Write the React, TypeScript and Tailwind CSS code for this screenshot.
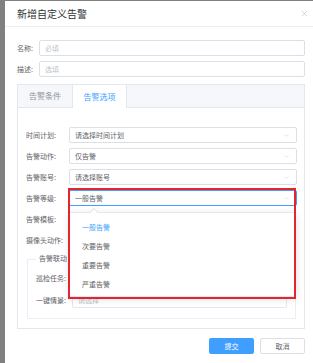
import { ChevronDown, ChevronUp, X } from "lucide-react";

const font = { fontFamily: '"Noto Sans CJK SC", "Noto Sans", sans-serif' };

function SelectBox({ value, placeholder, active }: { value?: string; placeholder?: string; active?: boolean }) {
  return (
    <div
      className={`flex-1 h-[16px] flex items-center justify-between pl-[5px] pr-[6px] rounded-[2px] border ${
        active ? "border-[#409eff]" : "border-[#dcdfe6]"
      }`}
    >
      <span className={`text-[7px] leading-none ${value ? "text-[#606266]" : "text-[#606266]"}`}>
        {value || placeholder}
      </span>
      {active ? (
        <ChevronUp className="w-[7px] h-[7px] text-[#c0c4cc]" strokeWidth={1.5} />
      ) : (
        <ChevronDown className="w-[7px] h-[7px] text-[#c0c4cc]" strokeWidth={1.5} />
      )}
    </div>
  );
}

function FormRow({ label, children }: { label: string; children?: React.ReactNode }) {
  return (
    <div className="flex items-center h-[16px]">
      <div className="w-[43px] shrink-0 text-[7px] leading-none text-[#606266]">{label}</div>
      {children}
    </div>
  );
}

export default function App() {
  return (
    <div className="relative w-[313px] h-[363px] overflow-hidden bg-[#808080] pl-[5px] pt-px flex" style={font}>
      <div className="flex-1 bg-white flex flex-col">
        {/* Header */}
        <div className="h-[26px] flex items-center justify-between pl-[12px] pr-[4px] border-b border-[#eeeeee]">
          <span className="text-[10px] leading-none text-[#303133]">新增自定义告警</span>
          <X className="w-[9px] h-[9px] text-[#b8b8b8]" strokeWidth={1.5} />
        </div>

        <div className="pl-[12px] pr-[8px]">
          {/* Name / description */}
          <div className="mt-[13px] flex items-center h-[16px]">
            <div className="w-[22px] shrink-0 text-[7px] leading-none text-[#606266]">名称:</div>
            <div className="flex-1 h-[16px] border border-[#dcdfe6] rounded-[2px] flex items-center pl-[5px]">
              <span className="text-[7px] leading-none text-[#c0c4cc]">必填</span>
            </div>
          </div>
          <div className="mt-[5px] flex items-center h-[16px]">
            <div className="w-[22px] shrink-0 text-[7px] leading-none text-[#606266]">描述:</div>
            <div className="flex-1 h-[16px] border border-[#dcdfe6] rounded-[2px] flex items-center pl-[5px]">
              <span className="text-[7px] leading-none text-[#c0c4cc]">选填</span>
            </div>
          </div>

          {/* Tabs */}
          <div className="mt-[7px] border border-[#e4e7ed] h-[245px] flex flex-col">
            <div className="h-[23px] bg-[#f5f7fa] border-b border-[#e4e7ed] flex">
              <div className="w-[54px] flex items-center justify-center text-[8px] text-[#909399]">告警条件</div>
              <div className="w-[55px] -mb-px bg-white border-x border-[#e4e7ed] flex items-center justify-center text-[8px] text-[#409eff]">
                告警选项
              </div>
            </div>

            <div className="pt-[19px] pl-[8px] pr-[7px] flex flex-col gap-[5px]">
              <FormRow label="时间计划:">
                <SelectBox placeholder="请选择时间计划" />
              </FormRow>
              <FormRow label="告警动作:">
                <SelectBox value="仅告警" />
              </FormRow>
              <FormRow label="告警账号:">
                <SelectBox placeholder="请选择账号" />
              </FormRow>
              <FormRow label="告警等级:">
                <SelectBox value="一般告警" active />
              </FormRow>
              <FormRow label="告警模板:" />
              <FormRow label="摄像头动作:" />

              {/* Fieldset */}
              <div className="relative mt-[6px] ml-[1px] mr-[1px] h-[60px] border border-[#ebeef5] px-[8px] pt-[10px]">
                <div className="absolute -top-[5px] left-[8px] bg-white px-[3px] flex items-center gap-[2px]">
                  <span className="text-[7px] leading-none text-[#606266]">告警联动</span>
                  <span className="w-[6px] h-[6px] rounded-full bg-[#409eff]" />
                </div>
                <div className="flex items-center h-[16px]">
                  <div className="w-[36px] text-[7px] leading-none text-[#606266]">巡检任务:</div>
                </div>
                <div className="mt-[6px] flex items-center h-[16px]">
                  <div className="w-[36px] text-[7px] leading-none text-[#606266]">一键情景:</div>
                  <div className="flex-1 h-[16px] border border-[#e4e7ed] rounded-[2px] flex items-center pl-[5px]">
                    <span className="text-[7px] leading-none text-[#c0c4cc]">请选择</span>
                  </div>
                </div>
              </div>
            </div>
          </div>

          {/* Footer buttons */}
          <div className="mt-[9px] flex justify-end gap-[6px]">
            <div className="w-[45px] h-[16px] rounded-[2px] bg-[#409eff] flex items-center justify-center text-[7px] text-white">
              提交
            </div>
            <div className="w-[45px] h-[16px] rounded-[2px] border border-[#dcdfe6] bg-white flex items-center justify-center text-[7px] text-[#606266]">
              取消
            </div>
          </div>
        </div>
      </div>

      {/* Dropdown menu */}
      <div className="absolute left-[69px] top-[212px] w-[227px] h-[85px] bg-white border border-[#e4e7ed] shadow-[0_2px_8px_rgba(0,0,0,0.12)] pt-[5px]">
        <div className="absolute -top-[4px] left-[21px] w-[6px] h-[6px] rotate-45 bg-white border-l border-t border-[#e4e7ed]" />
        {["一般告警", "次要告警", "重要告警", "严重告警"].map((item, i) => (
          <div
            key={item}
            className={`h-[19px] flex items-center pl-[12px] text-[7px] ${i === 0 ? "text-[#409eff]" : "text-[#606266]"}`}
          >
            {item}
          </div>
        ))}
      </div>

      {/* Red annotation */}
      <div className="absolute left-[68px] top-[188px] w-[228px] h-[111px] border-2 border-[#e5252e]" />
    </div>
  );
}
